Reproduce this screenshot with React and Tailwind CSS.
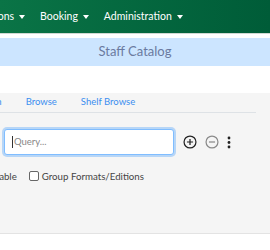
export default function App() {
  return (
    <div className="w-[270px] h-[250px] overflow-hidden bg-white font-['Lato',sans-serif]">
      {/* Navbar */}
      <div className="h-[34px] bg-gradient-to-r from-[#0a7446] to-[#005c38] border-b border-[#cfd8d3] flex items-center text-white text-[10.5px]">
        <div className="flex items-center gap-[15px] -ml-[42px]">
          <span className="flex items-center gap-[5px]">Acquisitions <Caret /></span>
          <span className="flex items-center gap-[5px]">Booking <Caret /></span>
          <span className="flex items-center gap-[5px]">Administration <Caret /></span>
        </div>
      </div>

      {/* Title band */}
      <div className="mt-[4px] h-[28px] bg-[#cce5ff] flex items-center justify-center text-[13px] text-[#6a7aa0]">
        Staff Catalog
      </div>

      {/* Search panel */}
      <div className="mt-[9px] h-[141px] bg-[#f5f5f5] border-b border-[#e3e3e3]">
        <div className="mr-[14px] mt-[27px] h-[20px] border-b border-[#dee2e6] flex items-center text-[9.5px] text-[#3b8ef0]">
          <div className="flex items-center gap-[24px] -ml-[34px]">
            <span>Location</span>
            <span>Browse</span>
            <span>Shelf Browse</span>
          </div>
        </div>

        <div className="mt-[16px] flex items-center">
          <div className="ml-[4px] w-[170px] h-[26px] bg-white border border-[#80bdff] rounded-[3px] shadow-[0_0_0_2px_rgba(0,123,255,0.25)] flex items-center px-[7px] text-[9.5px] text-[#888]">
            <span className="w-px h-[12px] bg-[#333] mr-px"></span>
            Query...
          </div>
          <div className="ml-[9px] flex items-center gap-[8px]">
            <svg width="14" height="14" viewBox="0 0 16 16" fill="none" stroke="#222" strokeWidth="1.4">
              <circle cx="8" cy="8" r="6.8" />
              <path d="M8 4.5v7M4.5 8h7" />
            </svg>
            <svg width="14" height="14" viewBox="0 0 16 16" fill="none" stroke="#8a8a8a" strokeWidth="1.4">
              <circle cx="8" cy="8" r="6.8" />
              <path d="M4.5 8h7" />
            </svg>
            <svg width="4" height="13" viewBox="0 0 4 13" fill="#222">
              <circle cx="2" cy="2" r="1.4" />
              <circle cx="2" cy="6.5" r="1.4" />
              <circle cx="2" cy="11" r="1.4" />
            </svg>
          </div>
        </div>

        <div className="mt-[14px] flex items-center text-[9.7px] text-[#444]">
          <div className="flex items-center -ml-[56px]">
            <span>Limit to Available</span>
            <span className="ml-[12px] w-[10px] h-[10px] border border-[#666] rounded-[2px] bg-white"></span>
            <span className="ml-[3px]">Group Formats/Editions</span>
          </div>
        </div>
      </div>
    </div>
  );
}

function Caret() {
  return <span className="w-0 h-0 border-l-[3px] border-r-[3px] border-t-[4px] border-l-transparent border-r-transparent border-t-white"></span>;
}
